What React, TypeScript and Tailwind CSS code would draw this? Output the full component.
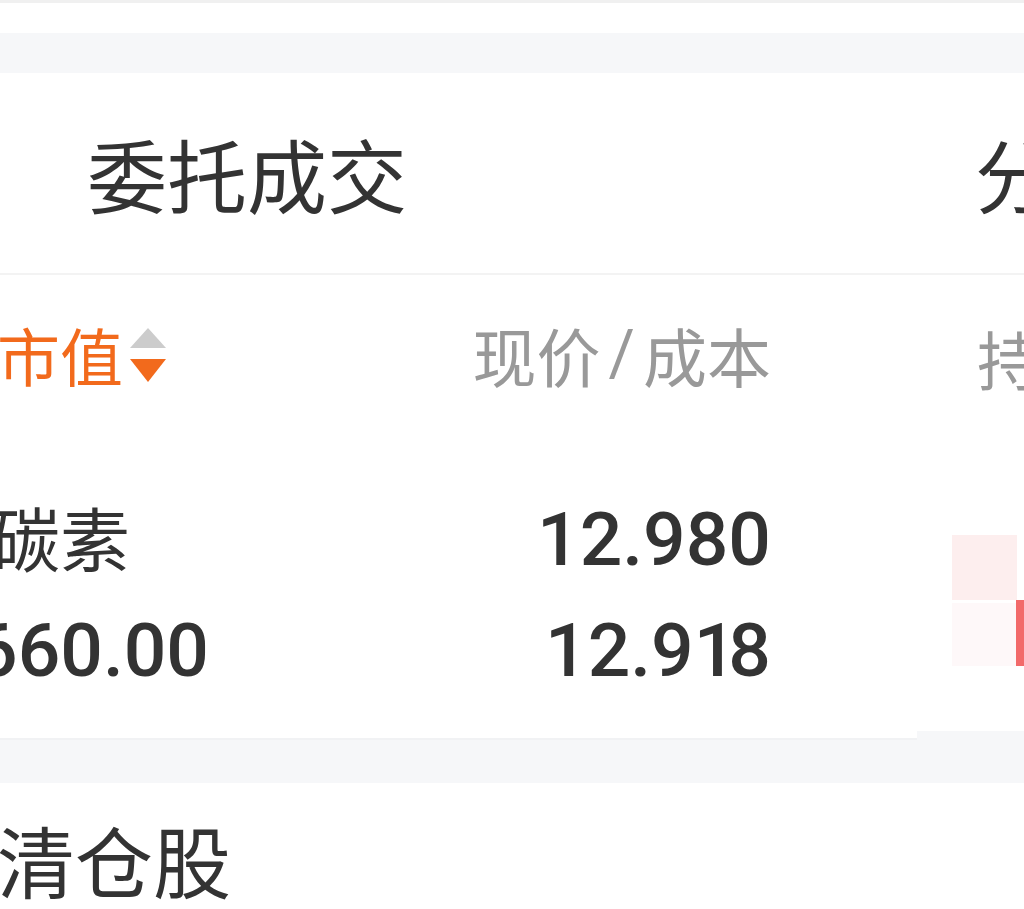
import React from "react"

const cjk = { fontFamily: '"Noto Sans CJK SC", "Noto Sans", sans-serif' }
const num = { fontFamily: 'Roboto, "Liberation Sans", sans-serif' }

function SortIcon() {
  return (
    <svg width="38" height="56" viewBox="0 0 38 56" className="ml-[6px] mt-[6px]">
      <polygon points="19,0 37,20 1,20" fill="#cccccc" />
      <polygon points="1,31 37,31 19,54" fill="#f26a1c" />
    </svg>
  )
}

export default function App() {
  return (
    <div className="w-[1024px] h-[909px] overflow-hidden bg-[#f6f7f9]" style={cjk}>
      <div className="h-[33px] bg-white border-t-[3px] border-[#f0f0f0]" />
      <div className="h-[40px]" />

      <div className="bg-white overflow-hidden">
        <div className="h-[202px] flex items-start pt-[59px] border-b-2 border-[#f3f3f3] text-[80px] leading-none text-[#333333] whitespace-nowrap">
          <span className="ml-[87px] shrink-0">委托成交</span>
          <span className="ml-[568px] shrink-0">分时</span>
        </div>
      </div>

      <div className="flex items-start overflow-hidden">
        <div className="w-[917px] shrink-0 bg-white border-b-2 border-[#f1f2f4]">
          <div className="h-[168px] pt-[47px] flex items-start w-[771px] whitespace-nowrap">
            <div className="flex-1 flex items-start -ml-[3px] text-[63px] leading-none text-[#f26a1c]">
              <span>市值</span>
              <SortIcon />
            </div>
            <div className="flex items-start text-[64px] leading-none text-[#999999]">
              <span>现价</span>
              <span className="mx-[8px]" style={num}>/</span>
              <span>成本</span>
            </div>
          </div>
          <div className="pt-[59px] pb-[14px] w-[771px] whitespace-nowrap">
            <div className="h-[111px] flex items-start">
              <span className="flex-1 -ml-[10px] text-[70px] leading-none text-[#333333]">碳素</span>
              <span className="text-[75px] leading-none font-medium text-[#333333]" style={num}>12.980</span>
            </div>
            <div className="h-[111px] flex items-start">
              <span className="flex-1 -ml-[25px] text-[75px] leading-none font-medium text-[#333333]" style={num}>660.00</span>
              <span className="text-[75px] leading-none font-medium text-[#333333]" style={num}>
                12.9<span className="tracking-[-8px]">1</span>8
              </span>
            </div>
          </div>
        </div>

        <div className="w-[107px] shrink-0 h-[456px] bg-white whitespace-nowrap">
          <div className="h-[168px] pt-[50px] pl-[60px] text-[64px] leading-none text-[#999999]">持仓</div>
          <div className="pt-[92px] pl-[35px]">
            <div className="w-[65px] h-[65px] bg-[#fdeeee]" />
            <div className="flex mt-[3px]">
              <div className="w-[64px] h-[63px] bg-[#fef8f9]" />
              <div className="w-[8px] h-[66px] -mt-[3px] bg-[#f26a6a]" />
            </div>
          </div>
        </div>
      </div>

      <div className="mt-[43px] h-[200px] bg-white pt-[37px]">
        <span className="block -ml-[3px] text-[78px] leading-none text-[#333333] whitespace-nowrap">清仓股</span>
      </div>
    </div>
  )
}
